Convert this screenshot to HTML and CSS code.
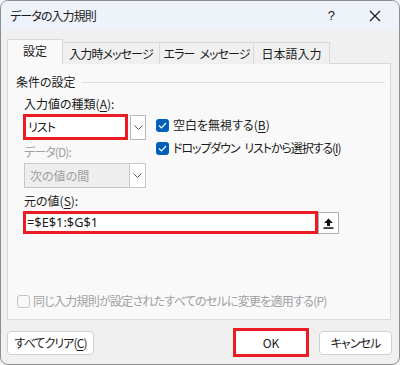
FILE: index.html
```html
<!DOCTYPE html>
<html lang="ja">

<head>
    <meta charset="UTF-8">
    <title>データの入力規則</title>
    <link rel="stylesheet" href="styles.css">
</head>

<body>
    <div class="dialog">
        <!-- Title bar -->
        <div class="titlebar">
            <span class="title kana">データの入力規則</span>
            <span class="help">?</span>
            <svg class="close" width="12" height="12" viewBox="0 0 12 12">
                <path d="M1 1 L11 11 M11 1 L1 11" stroke="#1b1b1b" stroke-width="1.2" fill="none" />
            </svg>
        </div>

        <!-- Tabs -->
        <div class="tabs">
            <div class="tab active tab-1">設定</div>
            <div class="tab tab-2 kana">入力時メッセージ</div>
            <div class="tab tab-3 kana">エラー<span class="space"> </span>メッセージ</div>
            <div class="tab tab-4">日本語入力</div>
        </div>

        <div class="panel">
            <div class="group-head">
                <span>条件の設定</span>
                <span class="group-line"></span>
            </div>

            <div class="settings">
                <div class="left-col">
                    <div class="label">入力値の種類(<u>A</u>):</div>
                    <div class="combo-row">
                        <div class="combo-box marked kana">リスト</div>
                        <div class="drop-btn">
                            <svg width="9" height="5" viewBox="0 0 9 5"><path d="M0.5 0.5 L4.5 4.5 L8.5 0.5" stroke="#555" fill="none" /></svg>
                        </div>
                    </div>
                    <div class="label disabled data-label kana">データ(D):</div>
                    <div class="combo-disabled">
                        <span class="combo-text">次の値の間</span>
                        <div class="drop-btn inner">
                            <svg width="9" height="5" viewBox="0 0 9 5"><path d="M0.5 0.5 L4.5 4.5 L8.5 0.5" stroke="#555" fill="none" /></svg>
                        </div>
                    </div>
                </div>

                <div class="right-col">
                    <div class="check-row">
                        <span class="checkbox checked">
                            <svg width="9" height="7" viewBox="0 0 9 7"><path d="M1 3.5 L3.5 6 L8 1" stroke="#fff" stroke-width="1.2" fill="none" /></svg>
                        </span>
                        <span>空白を無視する(<u>B</u>)</span>
                    </div>
                    <div class="check-row">
                        <span class="checkbox checked">
                            <svg width="9" height="7" viewBox="0 0 9 7"><path d="M1 3.5 L3.5 6 L8 1" stroke="#fff" stroke-width="1.2" fill="none" /></svg>
                        </span>
                        <span class="kana-tight">ドロップダウン<span class="space"> </span>リストから選択する(<u>I</u>)</span>
                    </div>
                </div>
            </div>

            <div class="source">
                <div class="label">元の値(<u>S</u>):</div>
                <div class="source-row">
                    <div class="source-input marked">=$E$1:$G$1</div>
                    <div class="collapse-btn">
                        <svg width="11" height="11" viewBox="0 0 11 11">
                            <path d="M5.5 0.5 L10 5 H7 V8 H4 V5 H1 Z" fill="#111" />
                            <rect x="0.5" y="9.3" width="10" height="1.5" fill="#111" />
                        </svg>
                    </div>
                </div>
            </div>

            <div class="apply-row disabled">
                <span class="checkbox empty"></span>
                <span class="kana-soft">同じ入力規則が設定されたすべてのセルに変更を適用する(P)</span>
            </div>
        </div>

        <!-- Footer buttons -->
        <div class="footer">
            <button class="btn clear-btn kana">すべてクリア(<u>C</u>)</button>
            <button class="btn ok-btn">OK</button>
            <button class="btn cancel-btn kana">キャンセル</button>
        </div>
    </div>
</body>

</html>
```

FILE: styles.css
```css
body {
    margin: 0;
    background-color: #f3f3f3;
    font-family: "Noto Sans CJK JP", "Noto Sans", sans-serif;
    font-size: 12px;
    color: #1b1b1b;
    font-feature-settings: "palt";
}

/* katakana in the original UI font is narrower */
.kana {
    letter-spacing: -0.9px;
}

.kana-tight {
    letter-spacing: -1.1px;
}

.kana-soft {
    letter-spacing: -0.75px;
}

.space {
    display: inline-block;
    width: 5px;
}

.dialog {
    box-sizing: border-box;
    width: 400px;
    height: 365px;
    border: 1px solid #8e8e8e;
    border-radius: 8px;
    background-color: #f0f0f0;
    overflow: hidden;
    display: flex;
    flex-direction: column;
}

u {
    text-decoration-thickness: 1px;
    text-underline-offset: 2px;
}

/* Title bar */
.titlebar {
    height: 29px;
    background-color: #eef2f9;
    display: flex;
    align-items: center;
    padding-left: 9px;
}

.title {
    flex: 1;
    line-height: 16px;
}

.help {
    font-family: "Liberation Sans", sans-serif;
    font-size: 13px;
    margin-right: 34px;
}

.close {
    margin-right: 18px;
}

/* Tabs */
.tabs {
    display: flex;
    align-items: flex-end;
    margin: 9px 0 -1px 6px;
    height: 25px;
    position: relative;
    z-index: 1;
}

.tab {
    box-sizing: border-box;
    height: 22px;
    border: 1px solid #d9d9d9;
    border-bottom: none;
    background-color: #f0f0f0;
    display: flex;
    align-items: center;
    justify-content: center;
    margin-left: -1px;
    line-height: 16px;
}

.tab.active {
    height: 25px;
    background-color: #f9f9f9;
    margin-left: 0;
    padding-bottom: 2px;
}

.tab-1 { width: 56px; }
.tab-2 { width: 98px; }
.tab-3 { width: 95px; }
.tab-4 { width: 77px; }

/* Panel */
.panel {
    box-sizing: border-box;
    width: 384px;
    height: 257px;
    margin-left: 6px;
    border: 1px solid #d9d9d9;
    background-color: #f9f9f9;
    display: flex;
    flex-direction: column;
}

.group-head {
    display: flex;
    align-items: center;
    margin: 10px 5px 0 8px;
    line-height: 16px;
}

.group-line {
    flex: 1;
    border-top: 1px solid #dcdcdc;
    margin-left: 6px;
}

.settings {
    display: flex;
    padding-left: 16px;
    margin-top: 6px;
}

.left-col {
    width: 122px;
}

.label {
    line-height: 16px;
}

.disabled {
    color: #a0a0a0;
}

.combo-row {
    display: flex;
    margin-top: 2px;
}

.marked {
    box-sizing: border-box;
    border: 3px solid #ec1c24;
    background-color: #fff;
}

.combo-box {
    width: 105px;
    height: 26px;
    margin-left: -1px;
    padding-left: 2px;
    line-height: 20px;
}

.drop-btn {
    box-sizing: border-box;
    width: 16px;
    height: 25px;
    margin: 1px 0 0 2px;
    border: 1px solid #b8b8b8;
    background-color: #fff;
    display: flex;
    align-items: center;
    justify-content: center;
}

.data-label {
    margin-top: 4px;
}

.combo-disabled {
    box-sizing: border-box;
    width: 122px;
    height: 25px;
    margin-top: 3px;
    border: 1px solid #c8c8c8;
    background-color: #eeeeee;
    display: flex;
    align-items: center;
    color: #a0a0a0;
}

.combo-text {
    flex: 1;
    padding-left: 5px;
}

.drop-btn.inner {
    height: 23px;
    margin: 0;
    border: none;
    border-left: 1px solid #c8c8c8;
}

.right-col {
    margin-left: 10px;
    padding-top: 21px;
    display: flex;
    flex-direction: column;
    gap: 7px;
}

.check-row {
    display: flex;
    align-items: center;
    gap: 4px;
    line-height: 16px;
}

.checkbox {
    box-sizing: border-box;
    width: 13px;
    height: 13px;
    border-radius: 3px;
    display: flex;
    align-items: center;
    justify-content: center;
}

.checkbox.checked {
    background-color: #005fb8;
}

.checkbox.empty {
    border: 1px solid #c4c4c4;
    background-color: #f9f9f9;
}

.source {
    padding-left: 16px;
    margin-top: 5px;
}

.source-row {
    display: flex;
    margin-top: 2px;
}

.source-input {
    width: 295px;
    height: 23px;
    margin-left: -1px;
    padding-left: 1px;
    line-height: 17px;
    font-family: "Noto Sans", sans-serif;
    font-size: 12.8px;
}

.collapse-btn {
    box-sizing: border-box;
    width: 21px;
    height: 22px;
    margin-top: 1px;
    border: 1px solid #b0b0b0;
    background-color: #fff;
    display: flex;
    align-items: center;
    justify-content: center;
}

.apply-row {
    margin-top: auto;
    margin-bottom: 10px;
    padding-left: 9px;
    display: flex;
    align-items: center;
    gap: 3px;
    line-height: 16px;
}

/* Footer */
.footer {
    display: flex;
    align-items: center;
    padding: 0 7px 0 6px;
    margin-top: 8px;
}

.btn {
    box-sizing: border-box;
    font-family: inherit;
    font-size: 12px;
    font-feature-settings: "palt";
    color: #1b1b1b;
    background-color: #fff;
    border: 1px solid #d0d0d0;
    border-radius: 4px;
    height: 24px;
    padding: 0;
}

.clear-btn {
    width: 87px;
}

.ok-btn {
    width: 76px;
    height: 29px;
    margin-left: auto;
    border: 3px solid #ec1c24;
    border-radius: 0;
}

.cancel-btn {
    width: 73px;
    margin-left: 10px;
}
```
